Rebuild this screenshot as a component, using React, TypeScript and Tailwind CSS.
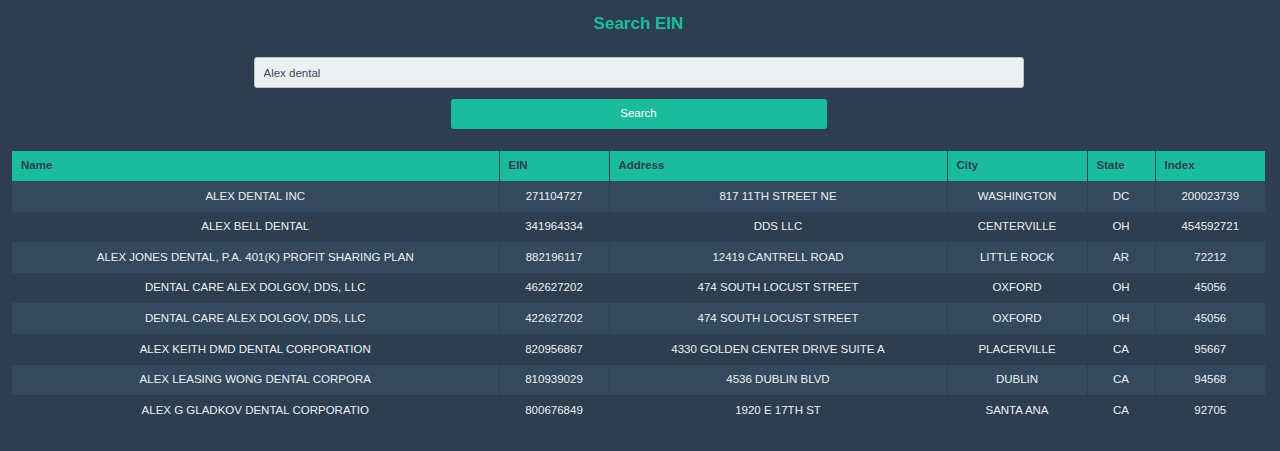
import { useState } from 'react'

const rows = [
  ['ALEX DENTAL INC', '271104727', '817 11TH STREET NE', 'WASHINGTON', 'DC', '200023739'],
  ['ALEX BELL DENTAL', '341964334', 'DDS LLC', 'CENTERVILLE', 'OH', '454592721'],
  ['ALEX JONES DENTAL, P.A. 401(K) PROFIT SHARING PLAN', '882196117', '12419 CANTRELL ROAD', 'LITTLE ROCK', 'AR', '72212'],
  ['DENTAL CARE ALEX DOLGOV, DDS, LLC', '462627202', '474 SOUTH LOCUST STREET', 'OXFORD', 'OH', '45056'],
  ['DENTAL CARE ALEX DOLGOV, DDS, LLC', '422627202', '474 SOUTH LOCUST STREET', 'OXFORD', 'OH', '45056'],
  ['ALEX KEITH DMD DENTAL CORPORATION', '820956867', '4330 GOLDEN CENTER DRIVE SUITE A', 'PLACERVILLE', 'CA', '95667'],
  ['ALEX LEASING WONG DENTAL CORPORA', '810939029', '4536 DUBLIN BLVD', 'DUBLIN', 'CA', '94568'],
  ['ALEX G GLADKOV DENTAL CORPORATIO', '800676849', '1920 E 17TH ST', 'SANTA ANA', 'CA', '92705'],
]

const headers = ['Name', 'EIN', 'Address', 'City', 'State', 'Index']
const widths = ['w-[487px]', 'w-[110px]', 'w-[338px]', 'w-[140px]', 'w-[68px]', 'w-[110px]']

export default function App() {
  const [query, setQuery] = useState('Alex dental')

  return (
    <div className="min-h-[451px] bg-[#2c3e50] font-['Liberation_Sans',Arial,sans-serif]">
      <div className="w-[1277px] px-3 pt-[14px] pb-6">
        <h1 className="text-center text-[17px] font-bold text-[#1abc9c] leading-5">Search EIN</h1>

        <div className="flex flex-col items-center mt-[23px]">
          <input
            value={query}
            onChange={e => setQuery(e.target.value)}
            className="w-[770px] h-[31px] rounded-[3px] bg-[#ecf0f1] px-[9px] text-[11.5px] text-[#34495e] border border-[#bdc3c7] outline-none"
          />
          <button className="mt-[11px] w-[376px] h-[30px] rounded-[3px] bg-[#1abc9c] text-white text-[11.5px]">
            Search
          </button>
        </div>

        <table className="mt-[22px] w-[1253px] border-collapse text-[11.5px]">
          <thead>
            <tr className="bg-[#1abc9c] h-[30px]">
              {headers.map((h, i) => (
                <th key={h} className={`${widths[i]} px-[9px] text-left font-bold text-[#2c3e50] border-x border-[#2c3e50] first:border-l-0 last:border-r-0`}>{h}</th>
              ))}
            </tr>
          </thead>
          <tbody>
            {rows.map((r, i) => (
              <tr key={i} className={`h-[30.6px] ${i % 2 === 0 ? 'bg-[#34495e]' : 'bg-[#2c3e50]'}`}>
                {r.map((c, j) => (
                  <td key={j} className="px-2 text-center text-[#ecf0f1] border-x border-[#2c3e50] first:border-l-0 last:border-r-0">{c}</td>
                ))}
              </tr>
            ))}
          </tbody>
        </table>
      </div>
    </div>
  )
}
